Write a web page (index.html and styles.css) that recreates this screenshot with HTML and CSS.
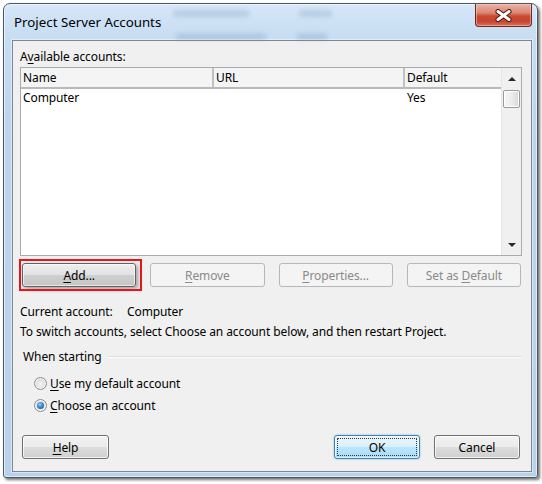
FILE: index.html
```html
<!DOCTYPE html>
<html lang="en">
<head>
<meta charset="utf-8">
<title>Project Server Accounts</title>
<link rel="stylesheet" href="styles.css">
</head>
<body>
<div class="window">
  <div class="titlebar">
    <div class="ghost g1"></div>
    <div class="ghost g2"></div>
    <div class="ghost g3"></div>
    <div class="ghost g4"></div>
    <span class="title">Project Server Accounts</span>
    <div class="close">
      <svg width="17" height="13" viewBox="0 0 17 13" aria-hidden="true">
        <path d="M3 2.5 L14 10.5 M14 2.5 L3 10.5" stroke="#4a1510" stroke-width="5" stroke-linecap="round" fill="none"/>
        <path d="M3 2.5 L14 10.5 M14 2.5 L3 10.5" stroke="#ffffff" stroke-width="3" stroke-linecap="round" fill="none"/>
      </svg>
    </div>
  </div>
  <div class="client">
    <div class="label">A<u>v</u>ailable accounts:</div>
    <div class="listbox">
      <div class="list-main">
        <div class="header">
          <div class="col c1">Name</div>
          <div class="col c2">URL</div>
          <div class="col c3">Default</div>
        </div>
        <div class="row">
          <div class="col c1">Computer</div>
          <div class="col c2"></div>
          <div class="col c3">Yes</div>
        </div>
      </div>
      <div class="scrollbar">
        <div class="arrow-box"><span class="arrow up"></span></div>
        <div class="thumb"></div>
        <div class="track"></div>
        <div class="arrow-box"><span class="arrow down"></span></div>
      </div>
    </div>
    <div class="btnrow">
      <div class="btn-wrap">
        <button class="btn add"><span><u>A</u>dd...</span></button>
        <div class="highlight"></div>
      </div>
      <button class="btn disabled"><span><u>R</u>emove</span></button>
      <button class="btn disabled"><span><u>P</u>roperties...</span></button>
      <button class="btn disabled"><span>Set as <u>D</u>efault</span></button>
    </div>
    <div class="info">
      <div class="current"><span class="k">Current account:</span><span class="v">Computer</span></div>
      <div>To switch accounts, select Choose an account below, and then restart Project.</div>
    </div>
    <div class="group">
      <div class="group-head"><span>When starting</span><div class="group-line"></div></div>
      <label class="opt"><span class="radio"></span><span><u>U</u>se my default account</span></label>
      <label class="opt"><span class="radio on"></span><span><u>C</u>hoose an account</span></label>
    </div>
    <div class="footer">
      <button class="btn help"><span><u>H</u>elp</span></button>
      <div class="spacer"></div>
      <button class="btn ok"><span>OK</span></button>
      <button class="btn cancel"><span>Cancel</span></button>
    </div>
  </div>
</div>
</body>
</html>
```
FILE: styles.css
```css
* { box-sizing: border-box; }
html, body { margin: 0; padding: 0; }
body {
  width: 542px;
  height: 484px;
  overflow: hidden;
  background: #ffffff;
  font-family: "Noto Sans", "Segoe UI", "Liberation Sans", sans-serif;
  font-size: 12px;
  letter-spacing: -0.1px;
  color: #000;
}
u { text-decoration: underline; text-underline-offset: 2px; }

.window {
  margin: 3px 0 0 3px;
  width: 535px;
  height: 475px;
  border: 1px solid #4b5663;
  border-radius: 7px 7px 3px 3px;
  background: linear-gradient(180deg, #d6e7f8 0px, #c6dcf2 36px, #bcd4ed 120px, #b9d1ea 100%);
  box-shadow: 2px 2px 3px rgba(0, 0, 0, 0.55), inset 0 0 0 1px rgba(255, 255, 255, 0.6);
  padding: 0 5px 5px 8px;
  display: flex;
  flex-direction: column;
}

.titlebar {
  height: 36px;
  display: flex;
  align-items: flex-start;
  position: relative;
}
.title {
  padding: 10px 0 0 2px;
  line-height: 16px;
  font-size: 13.3px;
  letter-spacing: 0;
  position: relative;
}
.ghost {
  position: absolute;
  height: 7px;
  border-radius: 3px;
  background: rgba(110, 140, 175, 0.25);
  filter: blur(2px);
}
.g1 { left: 161px; top: 6px; width: 76px; }
.g2 { left: 287px; top: 6px; width: 33px; }
.g3 { left: 164px; top: 29px; width: 90px; }
.g4 { left: 285px; top: 29px; width: 30px; }

.close {
  margin-left: auto;
  width: 57px;
  height: 23px;
  border: 1px solid #6b2a22;
  border-top: none;
  border-radius: 0 0 4px 4px;
  background: linear-gradient(180deg, #eab3a6 0%, #dc8672 40%, #c94a34 55%, #c8452f 80%, #d8745c 100%);
  box-shadow: inset 0 0 0 1px rgba(255, 220, 210, 0.45);
  display: flex;
  align-items: center;
  justify-content: center;
  position: relative;
}

.client {
  flex: 1;
  background: #f0f0f0;
  border: 1px solid #7d8894;
  padding: 8px 9px 0 7px;
  display: flex;
  flex-direction: column;
  box-shadow: 0 0 0 1px rgba(255, 255, 255, 0.45);
}

.label { line-height: 16px; }

.listbox {
  margin-top: 2px;
  height: 189px;
  border: 1px solid #a8abb0;
  background: #fff;
  display: flex;
}
.list-main { flex: 1; display: flex; flex-direction: column; }
.header {
  display: flex;
  height: 21px;
  background: #f4f4f4;
  border-bottom: 2px solid #b9b9b9;
}
.header .col { line-height: 19px; }
.row { display: flex; height: 18px; line-height: 18px; }
.col { padding-left: 2px; white-space: nowrap; }
.c1 { width: 191px; }
.c2 { width: 191px; }
.c3 { flex: 1; }
.header .c2, .header .c3 { border-left: 2px solid #c2c2c2; }
.row .c2, .row .c3 { border-left: 2px solid transparent; }

.scrollbar {
  width: 20px;
  background: #f0f0f0;
  border-left: 1px solid #e6e6e6;
  display: flex;
  flex-direction: column;
  align-items: center;
}
.arrow-box {
  height: 21px;
  width: 100%;
  display: flex;
  align-items: center;
  justify-content: center;
}
.arrow { width: 0; height: 0; border-left: 4px solid transparent; border-right: 4px solid transparent; }
.arrow.up { border-bottom: 4px solid #2a2a2a; }
.arrow.down { border-top: 4px solid #2a2a2a; }
.thumb {
  margin-top: 1px;
  width: 17px;
  height: 18px;
  border: 1px solid #9a9a9a;
  border-radius: 2px;
  background: linear-gradient(90deg, #f6f6f6 0%, #ececec 50%, #d8d8d8 100%);
  box-shadow: inset 0 0 0 1px #ffffff;
}
.track { flex: 1; }

.btn {
  font: inherit;
  letter-spacing: inherit;
  color: #000;
  height: 24px;
  padding: 0;
  border: 1px solid #707070;
  border-radius: 3px;
  background: linear-gradient(180deg, #f2f2f2 0%, #ebebeb 50%, #dddddd 50%, #cfcfcf 100%);
  box-shadow: inset 0 0 0 1px rgba(255, 255, 255, 0.75);
  display: flex;
  align-items: center;
  justify-content: center;
  position: relative;
}
.btn.disabled {
  border-color: #b5b8bb;
  background: #f4f4f4;
  color: #8a8a8a;
  box-shadow: none;
}

.btnrow {
  margin-top: 7px;
  padding: 0 1px 0 2px;
  display: grid;
  grid-template-columns: repeat(4, 1fr);
  column-gap: 14px;
}
.btn-wrap { position: relative; display: flex; }
.btn-wrap .btn { flex: 1; }
.btn.add {
  border-color: #626262;
  background: linear-gradient(180deg, #eeeeee 0%, #e2e2e2 50%, #d0d0d0 50%, #c4c4c4 100%);
  box-shadow: 2px 2px 4px rgba(0, 0, 0, 0.35), inset 0 0 0 1px rgba(255, 255, 255, 0.6);
}
.highlight {
  position: absolute;
  left: -3px;
  top: -4px;
  right: -6px;
  bottom: -4px;
  border: 2px solid #e8141c;
  pointer-events: none;
}

.info { margin-top: 15px; line-height: 20px; }
.current { display: flex; }
.current .k { width: 107px; }

.group { margin-top: 7px; }
.group-head {
  display: flex;
  align-items: center;
  padding-left: 3px;
  line-height: 16px;
  margin-bottom: 7px;
}
.group-line {
  flex: 1;
  height: 1px;
  margin: 0 0 2px 6px;
  background: #d5dfe5;
  box-shadow: 0 1px 0 #ffffff;
}
.opt {
  display: flex;
  align-items: center;
  height: 22px;
  padding-left: 14px;
}
.radio {
  width: 13px;
  height: 13px;
  border-radius: 50%;
  border: 1px solid #8a8c8e;
  background: radial-gradient(circle at 50% 55%, #f4f4f4 0%, #dcdcdc 60%, #cfcfcf 100%);
  box-shadow: inset 0 0 0 1px #f8f8f8;
  margin-right: 3px;
  display: flex;
  align-items: center;
  justify-content: center;
  flex-shrink: 0;
}
.radio.on::after {
  content: "";
  width: 7px;
  height: 7px;
  border-radius: 50%;
  background: radial-gradient(circle at 40% 35%, #9fd0f5 0%, #3b86cf 45%, #174f8c 100%);
}

.footer {
  margin-top: 19px;
  display: flex;
  padding: 0 2px;
}
.footer .spacer { flex: 1; }
.btn.help { width: 87px; }
.btn.ok { width: 86px; margin-right: 14px; }
.btn.cancel { width: 86px; }
.btn.ok {
  border-color: #3c7fb1;
  background: linear-gradient(180deg, #eaf6fd 0%, #d9f0fc 50%, #bee6fd 50%, #a7d9f5 100%);
  box-shadow: 0 0 2px rgba(60, 140, 200, 0.6), inset 0 0 0 1px rgba(255, 255, 255, 0.7);
}
.btn.ok::after {
  content: "";
  position: absolute;
  inset: 2px;
  border: 1px dotted #2a3a4a;
  border-radius: 1px;
}
```
